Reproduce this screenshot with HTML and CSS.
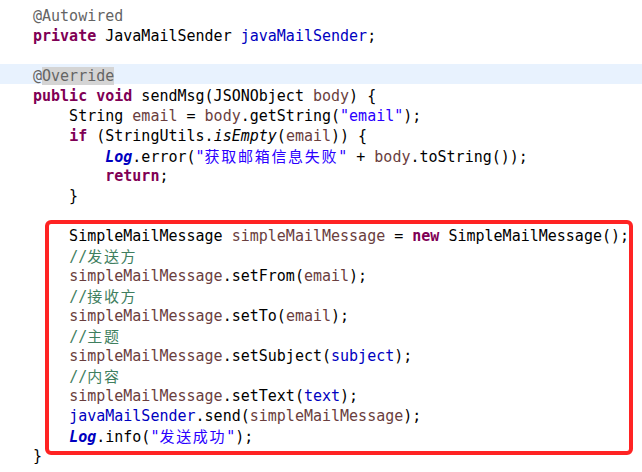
FILE: index.html
```html
<!DOCTYPE html>
<html lang="zh-CN">
<head>
  <meta charset="UTF-8">
  <meta name="viewport" content="width=device-width, initial-scale=1.0">
  <title>MailService.java</title>
  <link rel="stylesheet" href="styles.css">
</head>
<body>
  <div class="editor">
    <div class="line cut"><span class="kw">private</span> String <span class="field">text</span>;</div>
    <div class="line"><span class="anno">@Autowired</span></div>
    <div class="line"><span class="kw">private</span> JavaMailSender <span class="field">javaMailSender</span>;</div>
    <div class="line"></div>
    <div class="line current"><span class="anno">@<span class="occ">Override</span></span></div>
    <div class="line"><span class="kw">public</span> <span class="kw">void</span> sendMsg(JSONObject <span class="local">body</span>) {</div>
    <div class="line">    String <span class="local">email</span> = <span class="local">body</span>.getString(<span class="str">"email"</span>);</div>
    <div class="line">    <span class="kw">if</span> (StringUtils.<span class="static">isEmpty</span>(<span class="local">email</span>)) {</div>
    <div class="line">        <span class="sfield">Log</span>.error(<span class="str">"<span class="zh">获取邮箱信息失败</span>"</span> + <span class="local">body</span>.toString());</div>
    <div class="line">        <span class="kw">return</span>;</div>
    <div class="line">    }</div>
    <div class="line"></div>
    <div class="mark">
      <div class="line">    SimpleMailMessage <span class="local">simpleMailMessage</span> = <span class="kw">new</span> SimpleMailMessage();</div>
      <div class="line">    <span class="comment">//<span class="zh">发送方</span></span></div>
      <div class="line">    <span class="local">simpleMailMessage</span>.setFrom(<span class="local">email</span>);</div>
      <div class="line">    <span class="comment">//<span class="zh">接收方</span></span></div>
      <div class="line">    <span class="local">simpleMailMessage</span>.setTo(<span class="local">email</span>);</div>
      <div class="line">    <span class="comment">//<span class="zh">主题</span></span></div>
      <div class="line">    <span class="local">simpleMailMessage</span>.setSubject(<span class="field">subject</span>);</div>
      <div class="line">    <span class="comment">//<span class="zh">内容</span></span></div>
      <div class="line">    <span class="local">simpleMailMessage</span>.setText(<span class="field">text</span>);</div>
      <div class="line">    <span class="field">javaMailSender</span>.send(<span class="local">simpleMailMessage</span>);</div>
      <div class="line">    <span class="sfield">Log</span>.info(<span class="str">"<span class="zh">发送成功</span>"</span>);</div>
    </div>
    <div class="line">}</div>
  </div>
</body>
</html>
```

FILE: styles.css
```css
body {
  margin: 0;
  background-color: #fff;
  overflow: hidden;
}
.editor {
  margin-top: -16px; /* first line is cut off at the top */
  font-family: "DejaVu Sans Mono", "Liberation Mono", "Noto Sans CJK SC", monospace;
  font-size: 15px;
  color: #000;
}
.line {
  height: 18px;
  padding-top: 2px;
  padding-left: 33px;
  line-height: 20px;
  white-space: pre;
}
.line.cut {
  height: 20px;
  padding-top: 0;
  line-height: 17px;
}
.current {
  background-color: #e8f2fe;
}
.occ {
  background-color: #d4d4d4;
}
.kw {
  color: #7f0055;
  font-weight: bold;
}
.anno {
  color: #646464;
}
.field {
  color: #0000c0;
}
.sfield {
  color: #0000c0;
  font-weight: bold;
  font-style: italic;
}
.local {
  color: #6a3e3e;
}
.static {
  font-style: italic;
}
.str {
  color: #2a00ff;
}
.comment {
  color: #3f7f5f;
}
.zh {
  font-family: "Noto Sans CJK SC", sans-serif;
  letter-spacing: 1.7px;
}
.mark {
  position: relative;
}
.mark::after {
  content: "";
  position: absolute;
  top: -4px;
  left: 45px;
  right: 9px;
  bottom: -11px;
  border: 4px solid #ff2323;
  border-radius: 6px;
  pointer-events: none;
}
```
